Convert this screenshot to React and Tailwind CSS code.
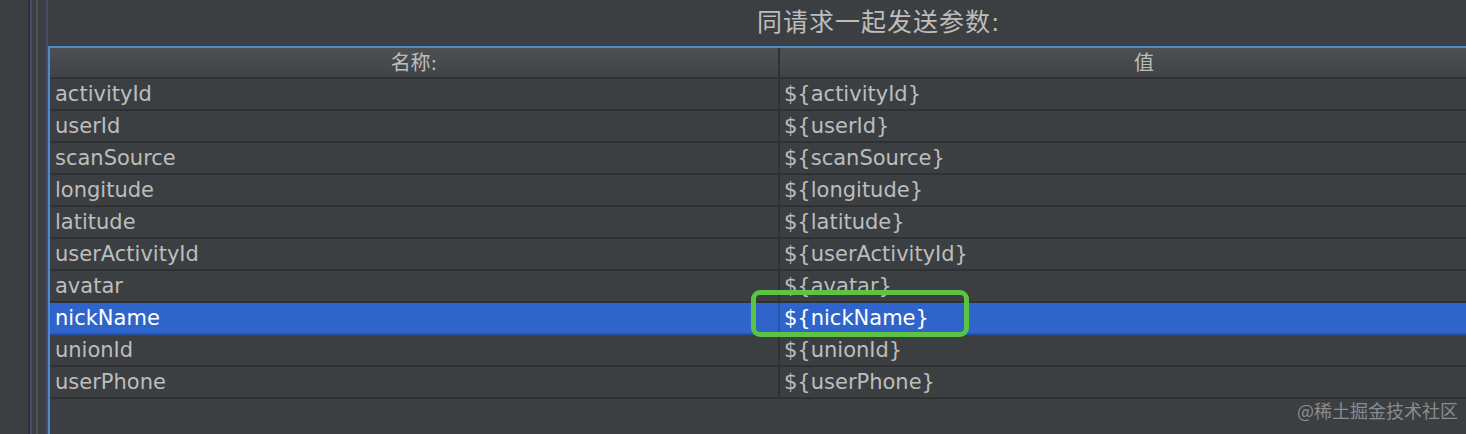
const rows = [
  ['activityId', '${activityId}'],
  ['userId', '${userId}'],
  ['scanSource', '${scanSource}'],
  ['longitude', '${longitude}'],
  ['latitude', '${latitude}'],
  ['userActivityId', '${userActivityId}'],
  ['avatar', '${avatar}'],
  ['nickName', '${nickName}'],
  ['unionId', '${unionId}'],
  ['userPhone', '${userPhone}'],
];

const font = { fontFamily: '"DejaVu Sans", "Noto Sans CJK SC", sans-serif' };

function LeftStrip() {
  return (
    <div className="flex h-full shrink-0">
      <div className="w-[28px] bg-[#3c3f41]" />
      <div className="w-[2px] bg-[#2d2f31]" />
      <div className="w-[2px] bg-[#4b4b66]" />
      <div className="w-[4px] bg-[#3c3f41]" />
      <div className="w-[2px] bg-[#505355]" />
      <div className="w-[8px] bg-[#3c3f41]" />
      <div className="w-[2px] bg-[#4b4b66]" />
    </div>
  );
}

function Row({ name, value, selected }) {
  return (
    <div
      className={
        'flex h-[32px] border-b-2 ' +
        (selected ? 'bg-[#2f65ca] text-white border-[#2a54a3]' : 'text-[#bdbdbd] border-[#2f3133]')
      }
    >
      <div className="w-[728px] shrink-0 pl-[5px] flex items-center text-[21px] leading-none">{name}</div>
      <div className={'w-[2px] shrink-0 ' + (selected ? 'bg-[#2a54a3]' : 'bg-[#2f3133]')} />
      <div className="relative flex-1 pl-[4px] flex items-center text-[21px] leading-none">
        {value}
        {selected && (
          <div className="absolute left-[-29px] top-[-13px] w-[218px] h-[47px] rounded-[9px] border-[5px] border-[#5cc443]" />
        )}
      </div>
    </div>
  );
}

export default function App() {
  return (
    <div className="w-[1466px] h-[434px] bg-[#3c3f41] overflow-hidden flex relative" style={font}>
      <LeftStrip />
      <div className="flex-1 flex flex-col min-w-0">
        <div className="h-[46px] flex items-center shrink-0">
          <div className="pl-[709px] text-[25px] text-[#bdbdbd] tracking-[1px]">同请求一起发送参数:</div>
        </div>
        <div className="flex-1 border-t-2 border-l-2 border-[#4a8ccc] w-[1460px] flex flex-col">
          <div className="h-[31px] flex shrink-0 bg-gradient-to-b from-[#4d5053] to-[#414447] border-b-2 border-[#2f3133] text-[#bdbdbd] text-[20px]">
            <div className="w-[728px] shrink-0 flex items-center justify-center">名称:</div>
            <div className="w-[2px] shrink-0 bg-[#2f3133]" />
            <div className="flex-1 flex items-center justify-center">值</div>
          </div>
          <div className="flex-1">
            {rows.map(([n, v]) => (
              <Row key={n} name={n} value={v} selected={n === 'nickName'} />
            ))}
          </div>
        </div>
      </div>
      <div
        className="absolute right-[8px] bottom-[10px] text-[18px] text-[#8a8c8e]"
        style={{ fontFamily: '"Noto Sans CJK SC", sans-serif' }}
      >
        @稀土掘金技术社区
      </div>
    </div>
  );
}
